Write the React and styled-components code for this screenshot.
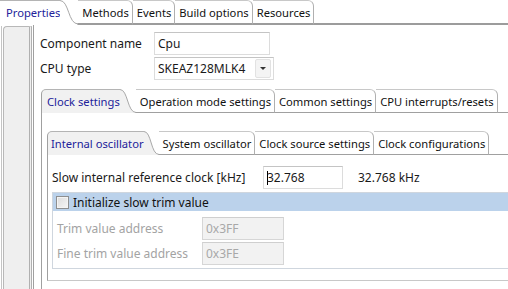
import React from 'react';
import styled, { createGlobalStyle } from 'styled-components';

const GlobalStyle = createGlobalStyle`
  html, body {
    margin: 0;
    padding: 0;
    background: #fff;
  }
  body {
    font-family: "Noto Sans", "Open Sans", sans-serif;
    font-size: 12px;
    color: #1a1a1a;
  }
`;

const LINE = '#a0a0a0';

const Frame = styled.div`
    width: 508px;
    height: 289px;
    overflow: hidden;
    background: #fff;
    display: flex;
    flex-direction: column;
`;

const TabStrip = styled.div`
    display: flex;
    align-items: stretch;
    height: ${p => p.$h}px;
    flex-shrink: 0;
    white-space: nowrap;
    font-size: 11.2px;
`;

const ActiveTab = styled.div`
    display: flex;
    flex-shrink: 0;
`;

const ActiveFace = styled.div`
    display: flex;
    align-items: center;
    padding: 0 0 ${p => p.$line}px ${p => p.$pad}px;
    border-top: 1px solid #b4b4b4;
    border-left: ${p => (p.$flush ? 'none' : '1px solid ' + LINE)};
    border-top-left-radius: ${p => (p.$flush ? 0 : 5)}px;
    background: ${p => p.$bg};
    color: #22229a;
`;

const Tab = styled.div`
    display: flex;
    align-items: center;
    flex-shrink: 0;
    padding: 0 3px 0 ${p => p.$padLeft}px;
    border-top: 1px solid #c8c8c8;
    border-right: 1px solid #b0b0b0;
    border-top-right-radius: 6px;
    border-bottom: ${p => p.$line}px solid ${p => p.$lineColor};
    color: #111;
`;

const StripFill = styled.div`
    flex: 1;
    border-bottom: ${p => p.$line}px solid ${p => p.$lineColor};
`;

const Curve = ({ w, h, line, bg, lineColor }) => {
    const bottom = h - line / 2;
    return (
        <svg width={w} height={h} style={{ display: 'block', flexShrink: 0 }}>
            <path
                d={`M0 0.5 C ${w * 0.5} 0.5 ${w * 0.45} ${bottom} ${w} ${bottom} L ${w} ${h} L 0 ${h} Z`}
                fill={bg}
            />
            <path
                d={`M0 0.5 C ${w * 0.5} 0.5 ${w * 0.45} ${bottom} ${w} ${bottom}`}
                fill="none"
                stroke="#a8a8a8"
                strokeWidth="1"
            />
            <line x1={w - 0.5} y1={bottom} x2={w} y2={bottom} stroke={lineColor} strokeWidth={line} />
        </svg>
    );
};

const Tabs = ({ items, active, height, line, lineColor, curve, pad, bg, flush }) => (
    <TabStrip $h={height}>
        {items.map((t, i) =>
            i === active ? (
                <ActiveTab key={t}>
                    <ActiveFace $pad={pad} $line={line} $bg={bg} $flush={flush}>{t}</ActiveFace>
                    <Curve w={curve} h={height} line={line} bg={bg} lineColor={lineColor} />
                </ActiveTab>
            ) : (
                <Tab key={t} $line={line} $lineColor={lineColor} $padLeft={i === active + 1 ? 4 : 4}>
                    {t}
                </Tab>
            )
        )}
        <StripFill $line={line} $lineColor={lineColor} />
    </TabStrip>
);

const Body = styled.div`
    flex: 1;
    display: flex;
    min-height: 0;
`;

const Gutter = styled.div`
    width: 34px;
    box-sizing: border-box;
    flex-shrink: 0;
    display: flex;
    padding: 1px 1px 0 1px;
    border-right: 1px solid ${LINE};
`;

const Rail = styled.div`
    flex: 1;
    display: flex;
    padding-left: 1px;
    border-left: 1px solid #c4c4c4;
`;

const SidePanel = styled.div`
    flex: 1;
    background: #efefef;
    border: 1px solid #b8b8b8;
    border-right: 3px double #b0b0b0;
    border-bottom: none;
    border-top-left-radius: 4px;
`;

const Content = styled.div`
    flex: 1;
    min-width: 0;
    display: flex;
    flex-direction: column;
    padding: 7px 0 0 6px;
`;

const FormRow = styled.div`
    display: flex;
    align-items: center;
    height: 23px;
    margin-bottom: ${p => p.$gap || 0}px;
    color: ${p => (p.$disabled ? '#a3a3a3' : '#1a1a1a')};
`;

const Label = styled.div`
    width: ${p => p.$w}px;
    flex-shrink: 0;
`;

const TextBox = styled.div`
    box-sizing: border-box;
    width: ${p => p.$w}px;
    height: 23px;
    display: flex;
    align-items: center;
    padding-left: 3px;
    border: 1px solid ${p => (p.$disabled ? '#d6d6d6' : '#dcdcdc')};
    border-top-color: ${p => (p.$disabled ? '#cfcfcf' : '#c4c4c4')};
    background: ${p => (p.$disabled ? '#f2f2f2' : '#fff')};
    color: ${p => (p.$disabled ? '#a8a8a8' : '#1a1a1a')};
`;

const Caret = styled.span`
    display: inline-block;
    width: 1px;
    height: 14px;
    background: #000;
    margin-right: -1px;
`;

const SelectBox = styled(TextBox)`
    justify-content: space-between;
    padding-right: 2px;
`;

const DropButton = styled.div`
    width: 14px;
    height: 17px;
    display: flex;
    align-items: center;
    justify-content: center;
    background: #f4f4f4;
    border: 1px solid #e2e2e2;
    border-radius: 2px;
`;

const Arrow = styled.div`
    width: 0;
    height: 0;
    border-left: 3px solid transparent;
    border-right: 3px solid transparent;
    border-top: 3px solid #333;
`;

const ClockBlock = styled.div`
    margin: 9px 0 0 1px;
    display: flex;
    flex-direction: column;
    flex: 1;
`;

const TabPanel = styled.div`
    flex: 1;
    display: flex;
    flex-direction: column;
    padding: ${p => p.$pt}px 0 ${p => p.$pb || 0}px ${p => p.$pl}px;
    border-left: 1px solid ${LINE};
    border-bottom: ${p => (p.$bottom ? '1px solid #c8c8c8' : 'none')};
    flex-grow: ${p => (p.$bottom ? 0 : 1)};
`;

const Value = styled.div`
    margin-left: 15px;
`;

const GroupBox = styled.div`
    margin-top: 3px;
    border: 1px solid #cfd6de;
    border-right: none;
`;

const GroupHeader = styled.label`
    display: flex;
    align-items: center;
    height: 18px;
    padding-left: 3px;
    background: #bbd2eb;
    color: #111;
`;

const CheckBox = styled.span`
    box-sizing: border-box;
    width: 13px;
    height: 13px;
    margin-right: 4px;
    border: 1px solid #8e8f8f;
    background: linear-gradient(135deg, #dcdcdc, #f6f6f6);
    box-shadow: inset 0 0 0 1px #f4f4f4;
`;

const GroupBody = styled.div`
    padding: 6px 0 3px 4px;
    background: #fff;
`;

export default function App() {
    return (
        <>
            <GlobalStyle />
            <Frame>
                <Tabs
                    items={['Properties', 'Methods', 'Events', 'Build options', 'Resources']}
                    active={0}
                    height={25}
                    line={2}
                    lineColor="#9c9c9c"
                    curve={18}
                    pad={6}
                    bg="#fff"
                    flush
                />
                <Body>
                    <Gutter>
                        <Rail>
                            <SidePanel />
                        </Rail>
                    </Gutter>
                    <Content>
                        <FormRow $gap={2}>
                            <Label $w={114}>Component name</Label>
                            <TextBox $w={116}>Cpu</TextBox>
                        </FormRow>
                        <FormRow>
                            <Label $w={114}>CPU type</Label>
                            <SelectBox $w={120}>
                                SKEAZ128MLK4
                                <DropButton>
                                    <Arrow />
                                </DropButton>
                            </SelectBox>
                        </FormRow>

                        <ClockBlock>
                            <Tabs
                                items={['Clock settings', 'Operation mode settings', 'Common settings', 'CPU interrupts/resets']}
                                active={0}
                                height={24}
                                line={1}
                                lineColor={LINE}
                                curve={16}
                                pad={5}
                                bg="#f1f1f1"
                            />
                            <TabPanel $pt={18} $pl={5}>
                                <Tabs
                                    items={['Internal oscillator', 'System oscillator', 'Clock source settings', 'Clock configurations']}
                                    active={0}
                                    height={24}
                                    line={1}
                                    lineColor={LINE}
                                    curve={15}
                                    pad={3}
                                    bg="#f1f1f1"
                                />
                                <TabPanel $pt={11} $pl={4} $pb={11} $bottom>
                                    <FormRow>
                                        <Label $w={211}>Slow internal reference clock [kHz]</Label>
                                        <TextBox $w={80}>
                                            <Caret />
                                            32.768
                                        </TextBox>
                                        <Value>32.768 kHz</Value>
                                    </FormRow>
                                    <GroupBox>
                                        <GroupHeader>
                                            <CheckBox />
                                            Initialize slow trim value
                                        </GroupHeader>
                                        <GroupBody>
                                            <FormRow $gap={2} $disabled>
                                                <Label $w={145}>Trim value address</Label>
                                                <TextBox $w={82} $disabled>0x3FF</TextBox>
                                            </FormRow>
                                            <FormRow $disabled>
                                                <Label $w={145}>Fine trim value address</Label>
                                                <TextBox $w={82} $disabled>0x3FE</TextBox>
                                            </FormRow>
                                        </GroupBody>
                                    </GroupBox>
                                </TabPanel>
                            </TabPanel>
                        </ClockBlock>
                    </Content>
                </Body>
            </Frame>
        </>
    );
}
